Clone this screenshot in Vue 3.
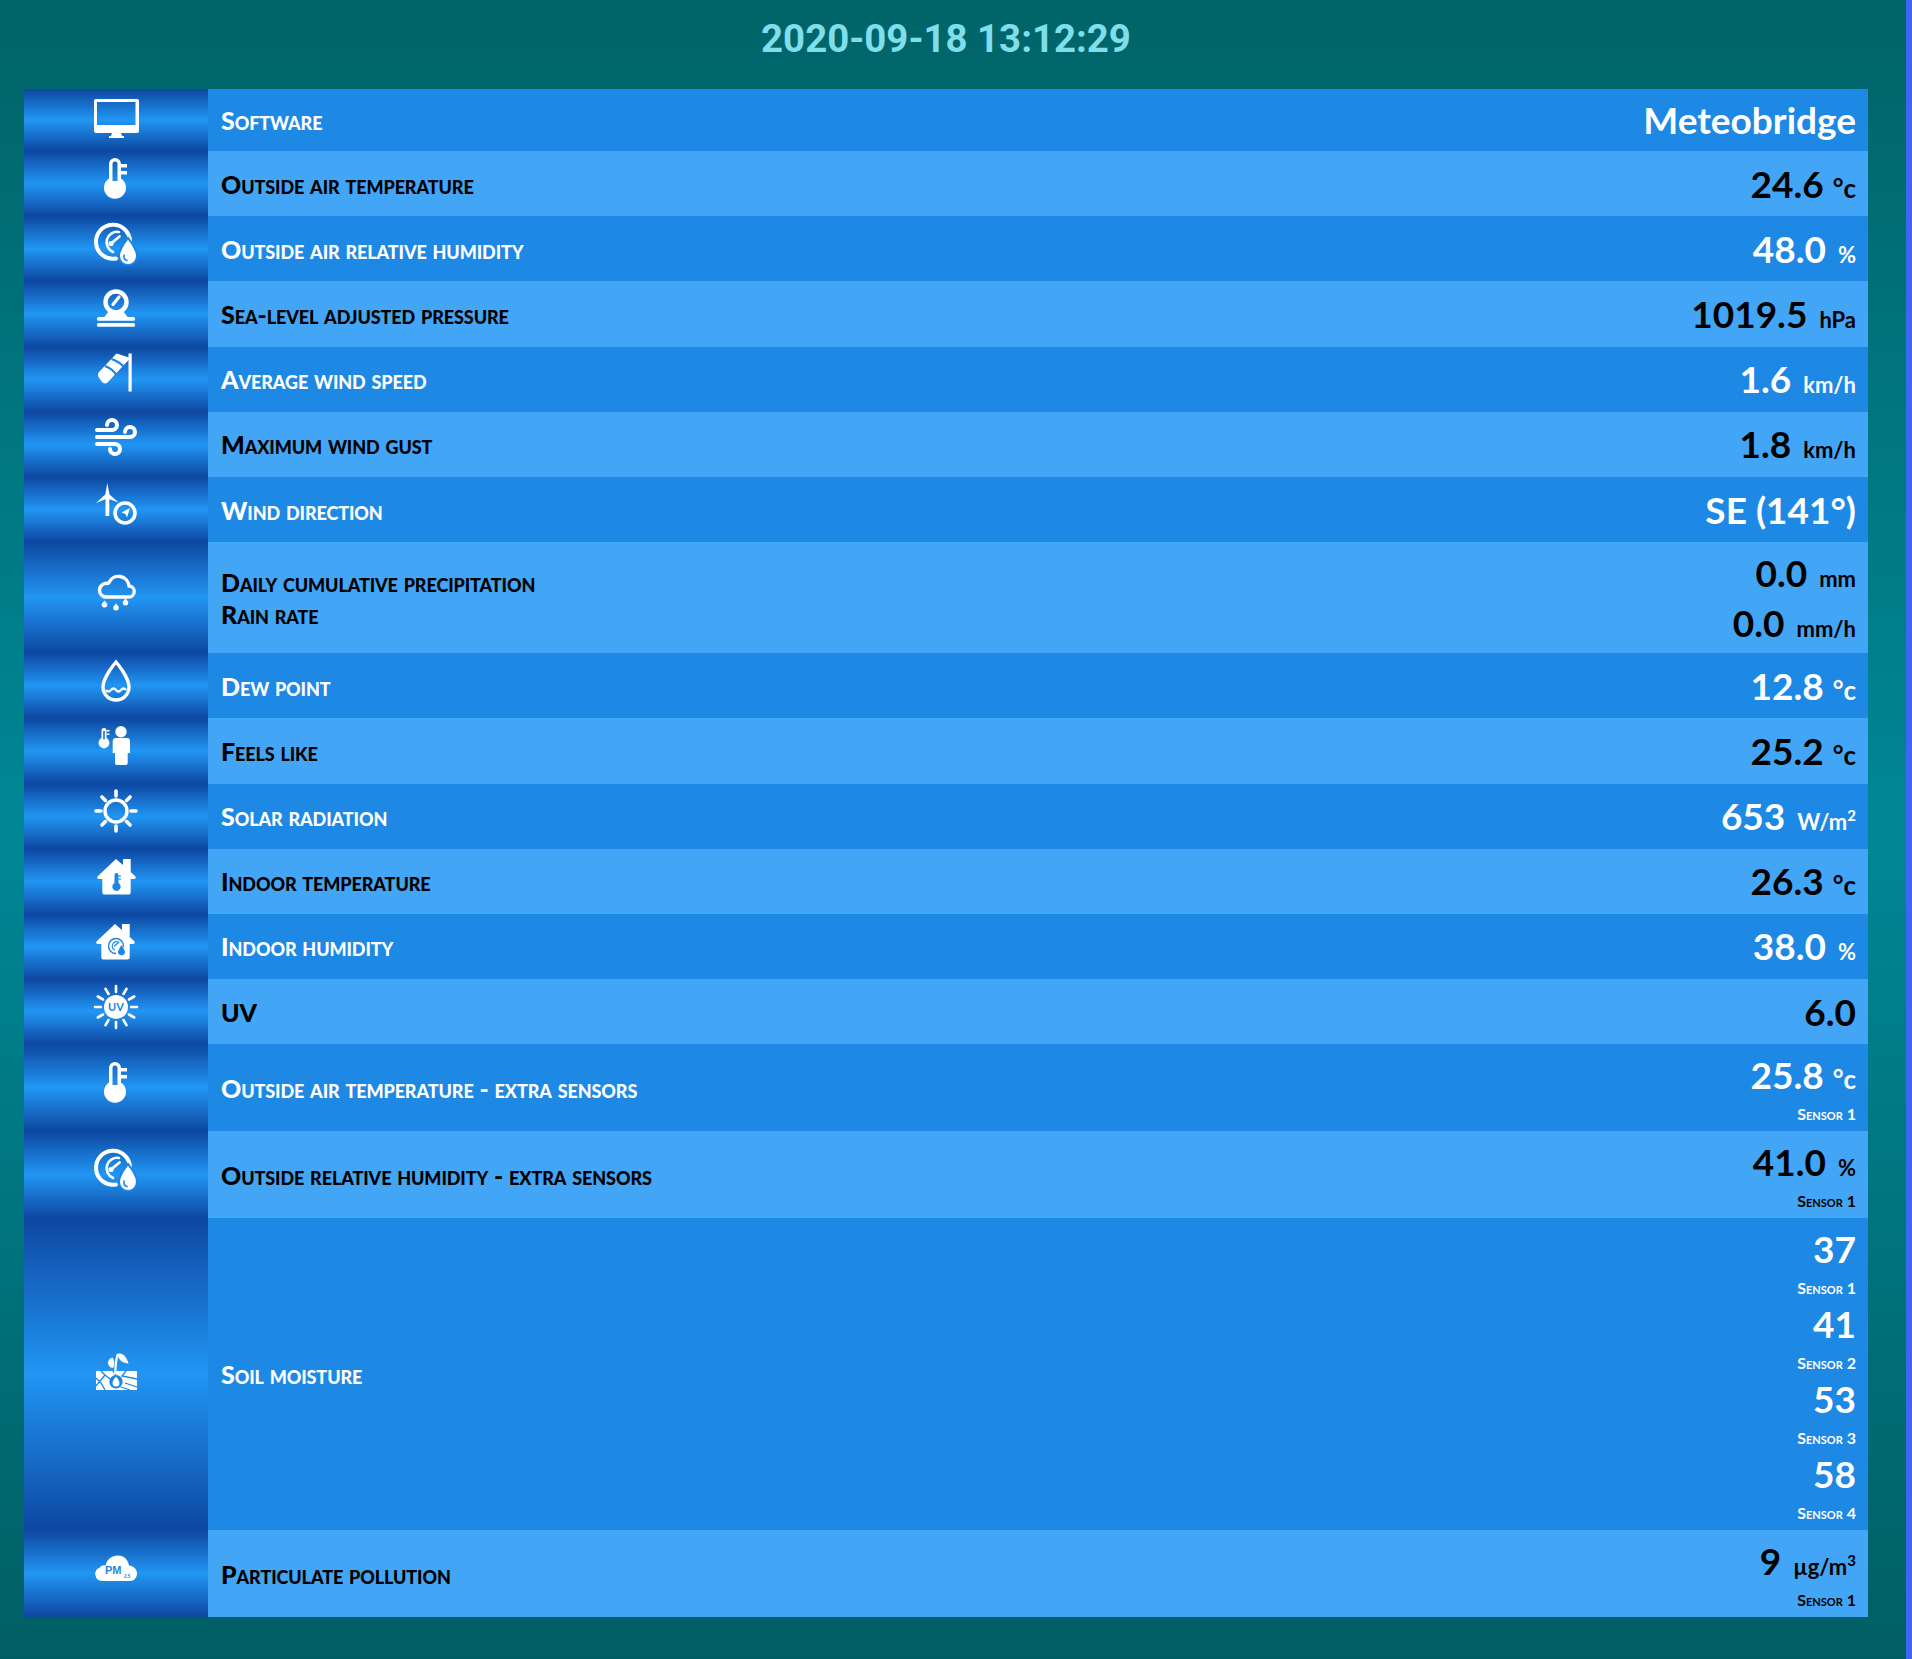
<template>
  <div class="page">
    <main class="board">
      <h1 class="clock">2020-09-18 13:12:29</h1>
      <section class="table">
        <div v-for="row in rows" :key="row.icon + row.labels[0]" class="row" :class="row.cls">
          <div class="icon-cell">
            <svg class="icon" viewBox="0 0 48 48" v-html="icons[row.icon]"></svg>
          </div>
          <div class="labels">
            <div v-for="l in row.labels" :key="l" class="label">{{ l }}</div>
          </div>
          <div class="values">
            <div v-for="(v, i) in row.values" :key="i" class="value-block">
              <div class="value">{{ v.v }}<span v-if="v.u" class="unit" :class="{ deg: v.u === deg }">{{ v.u }}<sup v-if="v.sup">{{ v.sup }}</sup></span></div>
              <div v-if="v.s" class="sensor">{{ v.s }}</div>
            </div>
          </div>
        </div>
      </section>
    </main>
    <div class="strip"></div>
  </div>
</template>

<script setup>
const B = '#1c86e6'
const thermo = `<path fill="#fff" fill-rule="evenodd" d="M17 9a6 6 0 0 1 12 0v14.500a11 11 0 1 1-12 0z M20.500 9a2.500 2.500 0 0 1 5 0v17h-5z"/><rect fill="#fff" x="29" y="9" width="6" height="3.500"/><rect fill="#fff" x="29" y="16" width="6" height="3.500"/>`
const gauge = `<g fill="none" stroke="#fff" stroke-linecap="round"><path stroke-width="4" d="M38 22A17 17 0 1 0 24 38.500"/><path stroke-width="2.600" d="M27 12A10.500 10.500 0 0 0 21 32"/><path stroke-width="2.800" d="M19 23.500L27.500 16.500"/></g><circle cx="19" cy="23.500" r="2.600" fill="#fff"/><path fill="#fff" stroke="${B}" stroke-width="2" d="M36 18C36 18 45 29 45 36a9 9 0 0 1-18 0C27 29 36 18 36 18z"/><path fill="none" stroke="${B}" stroke-width="1.600" stroke-linecap="round" d="M32 35c-.4 3 1 5 3 5.500"/>`

const icons = {
  monitor: `<path fill="#fff" fill-rule="evenodd" d="M4 8H45a2 2 0 0 1 2 2V40a2 2 0 0 1-2 2H4a2 2 0 0 1-2-2V10a2 2 0 0 1 2-2z M5 11V34H43.500V11z"/><path fill="#fff" d="M20 42h9l1 3h2v2H17v-2h2z"/>`,
  thermo,
  gauge,
  pressure: `<circle cx="24" cy="17" r="10.500" fill="none" stroke="#fff" stroke-width="4.400"/><path d="M21 19.500L27 12" stroke="#fff" stroke-width="3.200" stroke-linecap="round"/><path fill="#fff" d="M17 26H31L36 32.500H12z"/><rect fill="#fff" x="5" y="32" width="38" height="3.800" rx="1.500"/><rect fill="#fff" x="5" y="38" width="38" height="3.800" rx="1.500"/>`,
  sock: `<path fill="#fff" d="M24.500 3.500L38.500 8 15.500 32.500C13.500 34 11.500 33.500 10 32L6.500 27C5.500 25 6 23 7 22z"/><path fill="none" stroke="${B}" stroke-width="2.200" d="M19.500 9Q27 11.500 32 17M13 16Q20 18.500 24.500 25"/><rect fill="#fff" x="36.500" y="3.500" width="3.200" height="38"/>`,
  wind: `<g fill="none" stroke="#fff" stroke-width="4" stroke-linecap="round"><path d="M5 15H20a5 5 0 1 0-5-5"/><path d="M5 22H38a5 5 0 1 0-5-5"/><path d="M5 29H23a5 5 0 1 1-5 5"/></g>`,
  turbine: `<path fill="#fff" d="M15.300 2L17.500 13.500 26.500 21.500 15.300 17.500 4 22 13.300 13.500z"/><rect fill="#fff" x="13.500" y="16" width="3.800" height="19"/><circle cx="33" cy="32" r="10" fill="none" stroke="#fff" stroke-width="3.600"/><path fill="#fff" d="M38 27L35 36.500 33.500 33 29.500 31.500z"/>`,
  rain: `<path fill="none" stroke="#fff" stroke-width="3.400" stroke-linejoin="round" d="M13 28H36.500a5.500 5.500 0 0 0 .5-11A10.500 10.500 0 0 0 17 13.500 7.200 7.200 0 0 0 16 14.500 7 7 0 0 0 7.500 21 7 7 0 0 0 13 28z"/><g fill="#fff"><path d="M12.500 31.500l2.500 3a2.800 2.800 0 1 1-5 0z"/><path d="M24 34.500l2.500 3a2.800 2.800 0 1 1-5 0z"/><path d="M33.500 29.500l2.500 3a2.800 2.800 0 1 1-5 0z"/></g>`,
  drop: `<g fill="none" stroke="#fff"><path stroke-width="3.400" d="M24 5C24 5 37 20 37 30a13 13 0 0 1-26 0C11 20 24 5 24 5z"/><path stroke-width="2.400" d="M14 33q2.500 3 5 0t5 0 5 0 5 0"/></g>`,
  person: `<circle cx="29" cy="9.700" r="5.700" fill="#fff"/><path fill="#fff" d="M23 16H35a3 3 0 0 1 3 3V31H35.700V41a2 2 0 0 1-2 2H25a2 2 0 0 1-2-2V31H20.700V19a3 3 0 0 1 2.300-3z"/><path fill="#fff" fill-rule="evenodd" d="M9.500 8.500a2.500 2.500 0 0 1 5 0V16a5.500 5.500 0 1 1-5 0z M11.200 9v8.500h1.600V9z"/><rect fill="#fff" x="14.500" y="8" width="3" height="1.500"/><rect fill="#fff" x="14.500" y="11.500" width="3" height="1.500"/>`,
  sun: `<circle cx="24" cy="24" r="11" fill="none" stroke="#fff" stroke-width="3.400"/><g stroke="#fff" stroke-width="3.600" stroke-linecap="round"><path d="M24 4V9M24 39V44M4 24H9M39 24H44M9.900 9.900L13.400 13.400M34.600 34.600L38.100 38.100M38.100 9.900L34.600 13.400M13.400 34.600L9.900 38.100"/></g>`,
  homet: `<path fill="#fff" d="M24 7L31 13V7H38.700V20L43 24C44.500 25.500 43.500 27 42 27H38.700V40.500a2 2 0 0 1-2 2H12.300a2 2 0 0 1-2-2V27H7C5 27 4.500 25.500 6 24z"/><g fill="${B}"><path fill-rule="evenodd" d="M22.500 23a2 2 0 0 1 4 0v8a4.200 4.200 0 1 1-4 0z"/><rect x="26.500" y="23.500" width="2.400" height="1.200"/><rect x="26.500" y="26.500" width="2.400" height="1.200"/></g>`,
  homeg: `<path fill="#fff" d="M23 7L30 13V7H37.700V20L42 24C43.500 25.500 42.500 27 41 27H37.700V40.500a2 2 0 0 1-2 2H11.300a2 2 0 0 1-2-2V27H6C4 27 3.500 25.500 5 24z"/><g fill="none" stroke="${B}" stroke-linecap="round"><path stroke-width="1.400" d="M31.500 29.500A7.500 7.500 0 1 0 23.500 36.500"/><path stroke-width="1.100" d="M26 24.800A4.500 4.500 0 0 0 22.500 33"/><path stroke-width="1.300" d="M22.500 29L26.500 25.500"/></g><path fill="${B}" d="M29.500 28C29.500 28 33 33 33 35.500a3.600 3.600 0 0 1-7 0C26 33 29.500 28 29.500 28z"/>`,
  uv: `<circle cx="24" cy="24" r="12" fill="#fff"/><g stroke="#fff" stroke-width="2.600" stroke-linecap="round"><path d="M24 3V9M24 39V45M3 24H9M39 24H45M13.500 5.800L16.500 11M31.500 37L34.500 42.200M5.800 13.500L11 16.500M37 31.500L42.200 34.500M34.500 5.800L31.500 11M16.500 37L13.500 42.200M42.200 13.500L37 16.500M11 31.500L5.800 34.500"/></g><text x="24" y="28" text-anchor="middle" font-family="Lato, sans-serif" font-size="11" font-weight="700" fill="${B}">UV</text>`,
  soil: `<path fill="#fff" d="M4 26H45V45H4z"/><g fill="none" stroke="${B}" stroke-width="1.300"><path d="M4 41L13 30 9 26M13 30L18 34M4 33L9 38 13 45M34 26L30 31 45 34M33 38L45 42M29 42L38 45M21 26L24 30"/></g><circle cx="24" cy="36.700" r="6.700" fill="${B}"/><path fill="#fff" d="M24 31.500C24 31.500 27.500 35.500 27.500 38a3.500 3.500 0 0 1-7 0C20.500 35.500 24 31.500 24 31.500z"/><path fill="none" stroke="#fff" stroke-width="2.200" d="M23 29C24 22 23 16 26 9"/><path fill="#fff" d="M26 9C29 7.500 34 10 36.500 18.500C31 18.500 26 15 26 9z"/><path fill="#fff" d="M21 23C18 23 16 20 16 18C16 15 18 13 20.500 12.500C22.500 15 23 20 21 23z"/>`,
  pm: `<path fill="#fff" d="M10 36a7 7 0 0 1-2-13.600C9 21 11 20 13.500 20.500 15 14 20 10.500 26 10.500c6 0 10 4 11 10 5 .5 8 4 8 8 0 4-3 7.500-7 7.500z"/><text x="13" y="29.300" font-family="'Liberation Sans', sans-serif" font-size="11" font-weight="700" fill="${B}">PM</text><text x="32" y="32.500" font-family="'Liberation Sans', sans-serif" font-size="4.500" font-weight="700" fill="${B}">2.5</text>`
}

const deg = '°c'
const rows = [
  { cls: 'first', icon: 'monitor', labels: ['Software'], values: [{ v: 'Meteobridge' }] },
  { icon: 'thermo', labels: ['Outside air temperature'], values: [{ v: '24.6', u: deg }] },
  { icon: 'gauge', labels: ['Outside air relative humidity'], values: [{ v: '48.0', u: '%' }] },
  { icon: 'pressure', labels: ['Sea-level adjusted pressure'], values: [{ v: '1019.5', u: 'hPa' }] },
  { icon: 'sock', labels: ['Average wind speed'], values: [{ v: '1.6', u: 'km/h' }] },
  { icon: 'wind', labels: ['Maximum wind gust'], values: [{ v: '1.8', u: 'km/h' }] },
  { icon: 'turbine', labels: ['Wind direction'], values: [{ v: 'SE (141°)' }] },
  { cls: 'rain', icon: 'rain', labels: ['Daily cumulative precipitation', 'Rain rate'], values: [{ v: '0.0', u: 'mm' }, { v: '0.0', u: 'mm/h' }] },
  { icon: 'drop', labels: ['Dew point'], values: [{ v: '12.8', u: deg }] },
  { icon: 'person', labels: ['Feels like'], values: [{ v: '25.2', u: deg }] },
  { icon: 'sun', labels: ['Solar radiation'], values: [{ v: '653', u: 'W/m', sup: '2' }] },
  { icon: 'homet', labels: ['Indoor temperature'], values: [{ v: '26.3', u: deg }] },
  { icon: 'homeg', labels: ['Indoor humidity'], values: [{ v: '38.0', u: '%' }] },
  { icon: 'uv', labels: ['UV'], values: [{ v: '6.0' }] },
  { icon: 'thermo', labels: ['Outside air temperature - extra sensors'], values: [{ v: '25.8', u: deg, s: 'Sensor 1' }] },
  { icon: 'gauge', labels: ['Outside relative humidity - extra sensors'], values: [{ v: '41.0', u: '%', s: 'Sensor 1' }] },
  { icon: 'soil', labels: ['Soil moisture'], values: [{ v: '37', s: 'Sensor 1' }, { v: '41', s: 'Sensor 2' }, { v: '53', s: 'Sensor 3' }, { v: '58', s: 'Sensor 4' }] },
  { icon: 'pm', labels: ['Particulate pollution'], values: [{ v: '9', u: 'µg/m', sup: '3', s: 'Sensor 1' }] }
]
</script>

<style>
body {
  margin: 0;
}
</style>

<style scoped>
.page {
  display: flex;
  min-height: 1659px;
  background: linear-gradient(180deg, #006468 0%, #008796 50%, #005f64 100%);
}
.board {
  flex: 1;
  padding: 0 38px 42px 24px;
}
.strip {
  width: 6px;
  background: #3f66f2;
}
.clock {
  margin: 0;
  height: 89px;
  padding-top: 16px;
  box-sizing: border-box;
  text-align: center;
  font: 700 38.400px/46px Roboto, sans-serif;
  color: #80deea;
}
.row {
  display: grid;
  grid-template-columns: 184px 1fr auto;
  min-height: 65.200px;
  color: #fff;
  background: #1e88e5;
}
.row:nth-child(even) {
  color: #000;
  background: #42a5f5;
}
.row.first {
  min-height: 62px;
}
.row.rain .values {
  padding-top: 5.500px;
  padding-bottom: 5.500px;
}
.icon-cell {
  display: flex;
  align-items: center;
  justify-content: center;
  padding-bottom: 10px;
  background: linear-gradient(180deg, #0d47a1 0%, #2196f3 50%, #0d47a1 100%);
}
.icon {
  width: 48px;
  height: 48px;
  overflow: visible;
}
.labels {
  display: flex;
  flex-direction: column;
  justify-content: center;
  padding: 0 0 0 13px;
  font: 900 25px/32px Lato, "Noto Sans", sans-serif;
  font-variant: small-caps;
  letter-spacing: -0.1px;
}
.values {
  display: flex;
  flex-direction: column;
  justify-content: center;
  padding: 6px 12px 6px 0;
  text-align: right;
}
.value {
  height: 50px;
  font: 700 37px/50px Lato, "Noto Sans", sans-serif;
  white-space: nowrap;
}
.unit {
  margin-left: 12px;
  font-size: 22px;
}
.unit.deg {
  font-size: 26px;
  margin-left: 9px;
}
.unit sup {
  font-size: 15px;
  line-height: 0;
  vertical-align: 9px;
}
.sensor {
  height: 25px;
  font: 700 16px/28px Lato, "Noto Sans", sans-serif;
  font-variant: small-caps;
}
</style>
